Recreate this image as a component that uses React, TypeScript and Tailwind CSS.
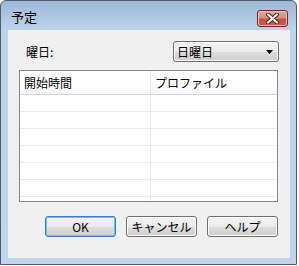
import React from 'react';

const font = { fontFamily: '"Noto Sans CJK JP", "Liberation Sans", sans-serif' };

function CloseIcon() {
  return (
    <svg width="13" height="11" viewBox="0 0 13 11">
      <path d="M2 1.5 L11 9.5 M11 1.5 L2 9.5" stroke="#5a1a12" strokeWidth="4" strokeLinecap="round" />
      <path d="M2 1.5 L11 9.5 M11 1.5 L2 9.5" stroke="#ffffff" strokeWidth="2.2" strokeLinecap="round" />
    </svg>
  );
}

function WinButton({ label, focused }: { label: string; focused?: boolean }) {
  return (
    <button
      className={
        focused
          ? 'w-[71px] h-[21px] rounded-[3px] border border-[#3c7fb1] bg-[linear-gradient(#f2f2f2_0%,#ebebeb_50%,#dddddd_51%,#cfcfcf_100%)] text-[12px] text-black shadow-[inset_0_0_0_1px_#48d0f8]'
          : 'w-[71px] h-[21px] rounded-[3px] border border-[#707070] bg-[linear-gradient(#f2f2f2_0%,#ebebeb_50%,#dddddd_51%,#cfcfcf_100%)] text-[12px] text-black shadow-[inset_0_0_0_1px_#fcfcfc]'
      }
    >
      {label}
    </button>
  );
}

export default function App() {
  const rows = [0, 1, 2, 3, 4, 5, 6];
  return (
    <div className="w-[299px] h-[266px] bg-white" style={font}>
      <div className="w-[297px] h-[265px] rounded-t-[6px] border border-[#4d5d6e] bg-[linear-gradient(#9db8d6_0px,#b3cbe6_20px,#bcd4ee_30px,#bdd5ee_100%)] pl-[7px] pr-[6px] pb-[6px] flex flex-col">
        <div className="h-[29px] flex items-start justify-between">
          <span className="mt-[8px] ml-[3px] text-[13px] leading-[16px] text-black">予定</span>
          <div className="mt-[9px] mr-[2px] w-[31px] h-[17px] rounded-[3px] border border-[#6e2a20] bg-[linear-gradient(#e8a697_0%,#d98e7c_45%,#c5513c_55%,#c9604a_100%)] shadow-[inset_0_0_0_1px_#eec2b6] flex items-center justify-center">
            <CloseIcon />
          </div>
        </div>
        <div className="flex-1 bg-[#f0f0f0] flex flex-col">
          <div className="flex items-center justify-between mt-[11px] pl-[18px] pr-[11px]">
            <span className="text-[12px] leading-[14px] text-black">曜日:</span>
            <div className="w-[106px] h-[21px] rounded-[3px] border border-[#707070] bg-[linear-gradient(#f2f2f2_0%,#ebebeb_50%,#dddddd_51%,#cfcfcf_100%)] shadow-[inset_0_0_0_1px_#fcfcfc] flex items-center justify-between pl-[3px] pr-[5px]">
              <span className="text-[12px] leading-[14px] text-black">日曜日</span>
              <svg width="7" height="4" viewBox="0 0 7 4">
                <path d="M0 0 H7 L3.5 4 Z" fill="#000" />
              </svg>
            </div>
          </div>
          <div className="mt-[8px] ml-[11px] w-[259px] h-[132px] border border-[#828790] bg-white overflow-hidden">
            <div className="h-[24px] flex bg-[linear-gradient(#ffffff_0%,#ffffff_60%,#f4f5f6_100%)] border-b border-[#d5d5d5]">
              <div className="w-[131px] border-r border-[#e3e4e6] pl-[4px] flex items-center text-[12px] text-black">開始時間</div>
              <div className="flex-1 pl-[4px] flex items-center text-[12px] text-black">プロファイル</div>
            </div>
            {rows.map((r) => (
              <div key={r} className="h-[17px] flex border-b border-[#ececec]">
                <div className="w-[131px] border-r border-[#ececec]" />
                <div className="flex-1" />
              </div>
            ))}
          </div>
          <div className="mt-[14px] ml-[37px] flex gap-[10px]">
            <WinButton label="OK" focused />
            <WinButton label="キャンセル" />
            <WinButton label="ヘルプ" />
          </div>
        </div>
      </div>
    </div>
  );
}
